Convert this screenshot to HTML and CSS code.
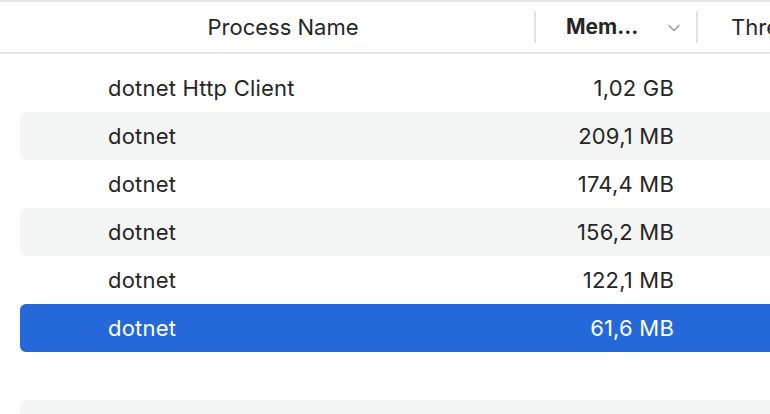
FILE: index.html
```html
<!DOCTYPE html>
<html>
<head>
<meta charset="utf-8">
<link rel="stylesheet" href="styles.css">
</head>
<body>
<div class="table">
  <div class="header">
    <div class="h-name">Process Name</div>
    <div class="h-mem">
      <span class="h-mem-label">Mem…</span>
      <svg class="chev" width="12" height="8" viewBox="0 0 12 8"><path d="M1 1.5 L6 6.5 L11 1.5" fill="none" stroke="#9a9a9a" stroke-width="1.5" stroke-linecap="round" stroke-linejoin="round"/></svg>
    </div>
    <div class="h-thr">Threads</div>
  </div>
  <div class="rows">
    <div class="row"><div class="c-name">dotnet Http Client</div><div class="c-mem">1,02 GB</div></div>
    <div class="row alt"><div class="c-name">dotnet</div><div class="c-mem">209,1 MB</div></div>
    <div class="row"><div class="c-name">dotnet</div><div class="c-mem">174,4 MB</div></div>
    <div class="row alt"><div class="c-name">dotnet</div><div class="c-mem">156,2 MB</div></div>
    <div class="row"><div class="c-name">dotnet</div><div class="c-mem">122,1 MB</div></div>
    <div class="row sel"><div class="c-name">dotnet</div><div class="c-mem">61,6 MB</div></div>
    <div class="row"></div>
    <div class="row alt"></div>
  </div>
</div>
</body>
</html>
```
FILE: styles.css
```css
html, body {
  margin: 0;
  padding: 0;
  background: #ffffff;
}
body {
  font-family: Inter, "Noto Sans", "Liberation Sans", sans-serif;
  color: #262626;
}
.table {
  width: 770px;
  height: 414px;
  overflow: hidden;
  border-top: 2px solid #e5e5e5;
  box-sizing: border-box;
}
.header {
  height: 50px;
  border-bottom: 2px solid #e6e6e6;
  display: flex;
  align-items: center;
  font-size: 22px;
  white-space: nowrap;
}
.header > * {
  flex-shrink: 0;
}
.h-name {
  width: 514px;
  margin-left: 20px;
  text-align: center;
  height: 32px;
  line-height: 32px;
  padding-left: 12px;
  box-sizing: border-box;
}
.h-mem {
  width: 164px;
  height: 32px;
  border-left: 2px solid #e3e3e3;
  border-right: 2px solid #e3e3e3;
  box-sizing: border-box;
  display: flex;
  align-items: center;
  padding-left: 30px;
  padding-right: 16px;
}
.h-mem-label {
  font-weight: 700;
  flex: 1;
  line-height: 32px;
  font-size: 21px;
}
.chev {
  display: block;
  margin-top: 2px;
}
.h-thr {
  padding-left: 33px;
  line-height: 32px;
}
.rows {
  padding-top: 10px;
  display: flex;
  flex-direction: column;
}
.row {
  height: 48px;
  margin-left: 20px;
  width: 760px;
  flex-shrink: 0;
  border-radius: 6px 0 0 6px;
  display: flex;
  align-items: center;
  font-size: 22px;
  letter-spacing: 0.2px;
  white-space: nowrap;
}
.row.alt {
  background: #f4f5f5;
}
.row.sel {
  background: #2568d9;
  color: #ffffff;
}
.c-name {
  width: 514px;
  flex-shrink: 0;
  padding-left: 88px;
  box-sizing: border-box;
}
.c-mem {
  width: 140px;
  flex-shrink: 0;
  text-align: right;
}
```
